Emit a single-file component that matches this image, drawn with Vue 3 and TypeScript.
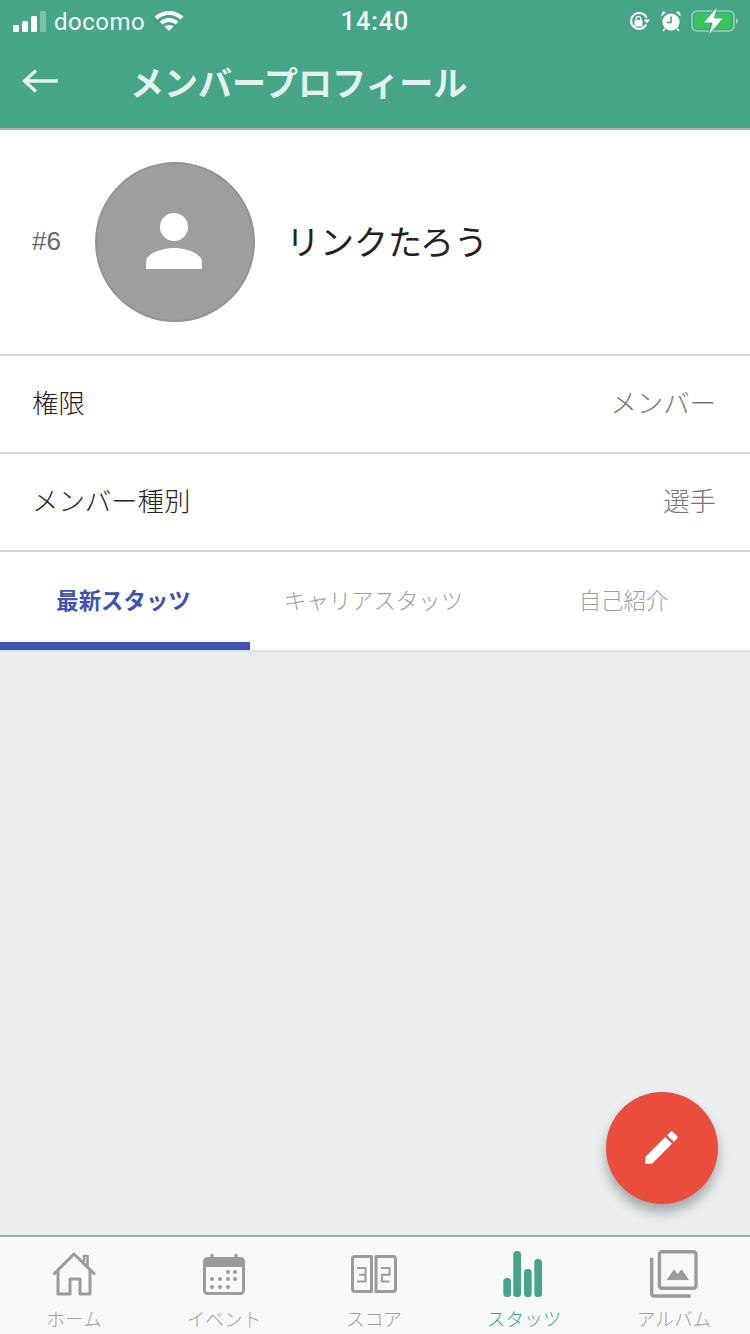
<script setup lang="ts">
const tabs = ['最新スタッツ', 'キャリアスタッツ', '自己紹介']
</script>

<template>
  <div class="page">
    <header class="head">
      <div class="status">
        <div class="st-left">
          <span class="bars"><i class="b1"></i><i class="b2"></i><i class="b3"></i><i class="b4"></i></span>
          <span class="carrier">docomo</span>
          <svg class="wifi" width="30" height="22" viewBox="0 0 30 22">
            <path d="M0.5 7.5C8.5 0 21.500 0 29.500 7.500L26.600 10.600C20 4.600 10 4.600 3.400 10.600Z" fill="#fff"/>
            <path d="M5.600 12.600C11 7.700 19 7.700 24.400 12.600L21.600 15.600C17.600 12.100 12.400 12.100 8.400 15.600Z" fill="#fff"/>
            <path d="M10.500 17.600C13 15.400 17 15.400 19.500 17.600L15 22Z" fill="#fff"/>
          </svg>
        </div>
        <span class="time">14:40</span>
        <div class="st-right">
          <svg width="22" height="20" viewBox="0 0 22 20">
            <path d="M17.300 13.500A8 8 0 1 1 17.600 7" fill="none" stroke="#fff" stroke-width="2"/>
            <path d="M14.500 8.500H21L17.800 12.500Z" fill="#fff"/>
            <rect x="5.500" y="9" width="8" height="6.500" rx="1" fill="#fff"/>
            <path d="M7.300 9V7.500a2.200 2.200 0 0 1 4.400 0V9" fill="none" stroke="#fff" stroke-width="1.300"/>
          </svg>
          <svg width="22" height="22" viewBox="0 0 22 22">
            <circle cx="11" cy="12" r="8.600" fill="#fff"/>
            <path d="M11 6.500V12.500H6.500" fill="none" stroke="#46a586" stroke-width="1.600"/>
            <path d="M1.500 6.500L6 2.200L3.800 1.200Q1 2.500 1.500 6.500ZM20.500 6.500L16 2.200L18.200 1.200Q21 2.500 20.500 6.500Z" fill="#fff"/>
            <path d="M5 18.500L3 21M17 18.500L19 21" stroke="#fff" stroke-width="1.600"/>
          </svg>
          <svg class="batt" width="48" height="30" viewBox="0 -2 48 30">
            <rect x="1" y="3" width="42" height="20" rx="5" fill="none" stroke="#fff" stroke-opacity=".45" stroke-width="1.600"/>
            <rect x="3.500" y="5.500" width="37" height="15" rx="2.500" fill="#35c759"/>
            <path d="M45 10v6q2-1 2-3t-2-3Z" fill="#fff" fill-opacity=".5"/>
            <path d="M26.500 -1.500L12 15H21L17.500 27.500L32.500 10H23.500Z" fill="#fff" stroke="#46a586" stroke-width="1"/>
          </svg>
        </div>
      </div>
      <div class="nav">
        <svg class="back" width="38" height="26" viewBox="0 0 38 26">
          <path d="M36 13H3M14 2.500L2.500 13L14 23.500" fill="none" stroke="#e4f2ed" stroke-width="3.400"/>
        </svg>
        <h1>メンバープロフィール</h1>
      </div>
    </header>

    <section class="profile">
      <span class="num">#6</span>
      <div class="avatar">
        <svg width="84" height="84" viewBox="0 0 24 24">
          <path d="M12 12a4 4 0 1 0 0-8 4 4 0 0 0 0 8Zm0 2c-2.700 0-8 1.300-8 4v2h16v-2c0-2.700-5.300-4-8-4Z" fill="#fff"/>
        </svg>
      </div>
      <span class="name">リンクたろう</span>
    </section>

    <div class="row"><span>権限</span><span class="val">メンバー</span></div>
    <div class="row"><span>メンバー種別</span><span class="val">選手</span></div>

    <nav class="tabs">
      <div v-for="(t, i) in tabs" :key="t" class="tab" :class="{ on: i === 0 }">{{ t }}</div>
    </nav>

    <main class="content">
      <button class="fab" type="button" aria-label="編集">
        <svg width="43" height="43" viewBox="0 0 24 24">
          <path d="M3 17.250V21h3.750L17.810 9.940l-3.750-3.750L3 17.250ZM20.710 7.040a1 1 0 0 0 0-1.410l-2.340-2.340a1 1 0 0 0-1.410 0l-1.830 1.830 3.750 3.750 1.830-1.830Z" fill="#fff"/>
        </svg>
      </button>
    </main>

    <footer class="tabbar">
      <div class="item">
        <svg width="48" height="46" viewBox="0 0 48 46" fill="none" stroke="#9b9b9b" stroke-width="3" stroke-linejoin="round">
          <path d="M2.500 23.500L23 3L44 23.500"/>
          <path d="M7 19V43H19V28H29V43H39V19"/>
          <path d="M33 11V5H36.500V16" stroke-width="2.600"/>
        </svg>
        <span>ホーム</span>
      </div>
      <div class="item">
        <svg width="44" height="44" viewBox="0 0 44 44">
          <rect x="1.500" y="5.500" width="39" height="35" rx="3" fill="none" stroke="#9b9b9b" stroke-width="3"/>
          <path d="M3 7.500Q3 6 5 6H37Q39 6 39 7.500V14H3Z" fill="#9b9b9b"/>
          <rect x="7.500" y="1" width="3" height="5" fill="#9b9b9b"/>
          <rect x="31.500" y="1" width="3" height="5" fill="#9b9b9b"/>
          <g fill="#9b9b9b">
            <circle cx="25" cy="19" r="2"/><circle cx="32" cy="19" r="2"/>
            <circle cx="9" cy="26" r="2"/><circle cx="17" cy="26" r="2"/><circle cx="25" cy="26" r="2"/><circle cx="32" cy="26" r="2"/>
            <circle cx="9" cy="34" r="2"/><circle cx="17" cy="34" r="2"/><circle cx="25" cy="34" r="2"/>
          </g>
        </svg>
        <span>イベント</span>
      </div>
      <div class="item">
        <svg width="48" height="43" viewBox="0 0 48 43" fill="none" stroke="#9b9b9b">
          <path d="M4 2.500H20.500V37.500H4Q1.500 37.500 1.500 35V5Q1.500 2.500 4 2.500ZM25 2.500H42Q44.500 2.500 44.500 5V35Q44.500 37.500 42 37.500H25Z" stroke-width="3" stroke-linejoin="round"/>
          <path d="M6 14H14.500V27.500H6M8 20.700H14.500M30 14H38.500V20.700H31V27.500H38.500" stroke-width="2"/>
        </svg>
        <span>スコア</span>
      </div>
      <div class="item active">
        <svg width="46" height="46" viewBox="0 0 46 46" fill="#46a586">
          <rect x="1.300" y="27" width="7.700" height="19" rx="3.500"/>
          <rect x="11.300" y="0" width="7.700" height="46" rx="3.500"/>
          <rect x="22" y="18" width="7.700" height="28" rx="3.500"/>
          <rect x="32.300" y="8" width="7.700" height="38" rx="3.500"/>
        </svg>
        <span>スタッツ</span>
      </div>
      <div class="item">
        <svg class="album" width="50" height="52" viewBox="0 0 50 52" fill="none" stroke="#9b9b9b" stroke-width="3.400">
          <rect x="9.400" y="5.700" width="36.600" height="36.600" rx="2.500"/>
          <path d="M1.700 11.700V47.500Q1.700 50 4.200 50H40.700"/>
          <path d="M16.700 34L24 23.300L27.700 28L31.700 23.300L39 34Z" fill="#9b9b9b" stroke="none"/>
        </svg>
        <span>アルバム</span>
      </div>
    </footer>
  </div>
</template>

<style scoped>
.page {
  width: 750px;
  height: 1334px;
  display: flex;
  flex-direction: column;
  overflow: hidden;
  background: #fff;
  font-family: "Noto Sans CJK JP", "Noto Sans", sans-serif;
}
.head {
  height: 130px;
  flex: none;
  box-sizing: border-box;
  background: #46a586;
  border-bottom: 2px solid #b0b5b3;
  color: #fff;
}
.status {
  height: 40px;
  padding: 0 13px;
  display: grid;
  grid-template-columns: 1fr auto 1fr;
  align-items: center;
}
.st-left {
  display: flex;
  align-items: center;
}
.bars {
  display: flex;
  align-items: flex-end;
  gap: 3px;
  height: 21px;
}
.bars i {
  width: 6px;
  background: #fff;
  border-radius: 1.5px;
}
.b1 { height: 7px; }
.b2 { height: 11px; }
.b3 { height: 16px; }
.b4 { height: 21px; opacity: .3; }
.carrier {
  margin-left: 8px;
  padding-top: 2px;
  font: 24px/40px Roboto, "Noto Sans", sans-serif;
  letter-spacing: .5px;
  color: #f2f9f6;
}
.wifi { margin-left: 9px; margin-top: -2px; }
.time {
  padding-top: 2px;
  font: 500 25px/40px Roboto, sans-serif;
  letter-spacing: 1px;
  color: #f6fbf9;
}
.st-right {
  display: flex;
  justify-content: flex-end;
  align-items: center;
  gap: 9px;
  margin-right: -2px;
}
.nav {
  display: flex;
  align-items: center;
  height: 87px;
  padding-left: 22px;
}
.back { margin-top: -6px; }
h1 {
  margin: 0 0 4px 70px;
  font-size: 34px;
  font-weight: 700;
  line-height: 83px;
  color: #e4f2ed;
}
.profile {
  height: 226px;
  flex: none;
  box-sizing: border-box;
  border-bottom: 2px solid #d0d4d6;
  display: flex;
  align-items: center;
  padding-left: 32px;
}
.num {
  width: 63px;
  margin-bottom: 2px;
  font: 26px "Liberation Sans", sans-serif;
  color: #666;
}
.avatar {
  width: 160px;
  height: 160px;
  box-sizing: border-box;
  border-radius: 50%;
  background: #9e9e9e;
  border: 2px solid #939393;
  padding-bottom: 2px;
  display: flex;
  align-items: center;
  justify-content: center;
}
.avatar svg { margin-left: -2px; }
.name {
  margin-left: 31px;
  margin-bottom: 4px;
  font-size: 34px;
  color: #222;
}
.row {
  height: 98px;
  flex: none;
  box-sizing: border-box;
  border-bottom: 2px solid #d0d4d6;
  padding: 0 34px 6px 32px;
  display: flex;
  justify-content: space-between;
  align-items: center;
  font-size: 26.4px;
  font-weight: 300;
  color: #222;
}
.val { color: #757575; }
.tabs {
  height: 100px;
  flex: none;
  box-sizing: border-box;
  border-bottom: 2px solid #dfe2e4;
  display: grid;
  grid-template-columns: repeat(3, 250px);
}
.tab {
  display: flex;
  align-items: center;
  justify-content: center;
  height: 98px;
  box-sizing: border-box;
  padding: 0 3px 4px 0;
  font-size: 22.4px;
  font-weight: 300;
  color: #9e9e9e;
}
.tab.on {
  color: #3f51b5;
  font-weight: 700;
  border-bottom: 8px solid #3f51b5;
  padding-top: 8px;
}
.content {
  flex: 1;
  position: relative;
  background: #e9eef1;
}
.fab {
  position: absolute;
  right: 32px;
  bottom: 31px;
  width: 112px;
  height: 112px;
  padding: 0 2px 2px 0;
  border: 0;
  border-radius: 50%;
  background: #eb4d3d;
  display: flex;
  align-items: center;
  justify-content: center;
  box-shadow: 0 8px 12px rgba(0, 0, 0, .3);
}
.tabbar {
  height: 99px;
  flex: none;
  box-sizing: border-box;
  background: #f9f9f9;
  border-top: 2px solid #a8a8a8;
  display: grid;
  grid-template-columns: repeat(5, 150px);
}
.item {
  height: 97px;
  box-sizing: border-box;
  padding-bottom: 3px;
  display: flex;
  flex-direction: column;
  justify-content: flex-end;
  align-items: center;
  color: #a0a0a0;
  font-size: 18.7px;
  font-weight: 300;
}
.item svg {
  display: block;
  flex: none;
  margin-bottom: 8px;
}
.item svg.album { margin-bottom: 7px; }
.item span {
  margin-right: 2px;
  line-height: 26px;
  white-space: nowrap;
}
.active { color: #46a586; }
</style>
